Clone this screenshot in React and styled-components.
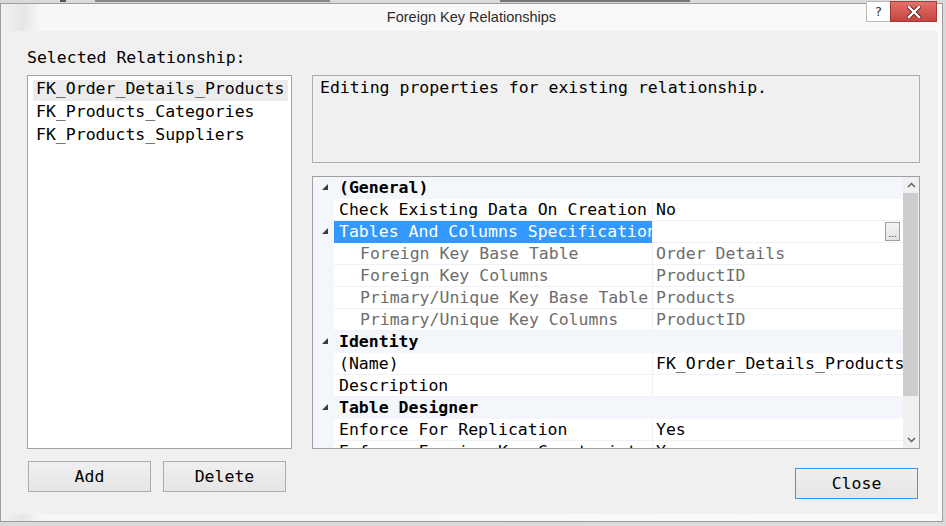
import styled, { createGlobalStyle } from 'styled-components';

const GlobalStyle = createGlobalStyle`
  html, body {
    margin: 0;
    padding: 0;
  }
  body {
    width: 946px;
    height: 526px;
    overflow: hidden;
    background: #d6d6d6;
    font-family: "DejaVu Sans Mono", "Liberation Mono", monospace;
  }
  * { box-sizing: border-box; }
`;

const Desktop = styled.div`
  width: 946px;
  height: 526px;
  padding-top: 3px;
  background:
    linear-gradient(90deg, transparent 60px, #555 60px, #555 66px, transparent 66px, transparent 95px, #888 95px, #888 330px, transparent 330px, transparent 500px, #777 500px, #777 690px, transparent 690px) top / 100% 2px no-repeat,
    #dadada;
`;

const Window = styled.div`
  position: relative;
  width: 943px;
  height: 519px;
  border: 1px solid #9c9c9c;
  background: linear-gradient(90deg, #f2f2f2 0, #e6e6e6 22px, #f7f7f7 40px, #f9f9f9 100%);
  display: flex;
  flex-direction: column;
`;

const TitleBar = styled.div`
  height: 27px;
  display: flex;
  align-items: center;
  justify-content: center;
  font-family: "Liberation Sans", Arial, sans-serif;
  font-size: 14.5px;
  color: #2b2b2b;
  padding-bottom: 1px;
`;

const Captions = styled.div`
  position: absolute;
  top: -3px;
  right: 5px;
  display: flex;
`;

const HelpButton = styled.div`
  width: 24px;
  height: 21px;
  background: #fff;
  border: 1px solid #b9b9b9;
  border-right: none;
  display: flex;
  align-items: center;
  justify-content: center;
  font-family: "DejaVu Sans", sans-serif;
  font-size: 13px;
  color: #333;
`;

const CloseX = styled.div`
  width: 47px;
  height: 21px;
  background: linear-gradient(#e0726c, #c7433d);
  border: 1px solid #a43a35;
  display: flex;
  align-items: center;
  justify-content: center;
`;

const Client = styled.div`
  flex: 1;
  margin: 0 4px 7px 7px;
  background: #f0f0f0;
  padding: 17px 17px 0 19px;
  display: grid;
  grid-template-columns: 265px 608px;
  grid-template-rows: 27px 374px auto;
  column-gap: 20px;
  color: #000;
  font-size: 16.5px;
`;

const Label = styled.div`
  grid-column: 1 / 3;
  line-height: 20px;
`;

const ListBox = styled.div`
  border: 1px solid #a3a3a3;
  background: #fff;
  padding: 4px 3px 0 5px;
`;

const ListItem = styled.div`
  height: 21px;
  line-height: 17px;
  padding: 0 3px 4px;
  margin-bottom: 2px;
  white-space: nowrap;
  background: ${(p) => (p.$selected ? '#ececec' : 'transparent')};
`;

const RightStack = styled.div`
  display: flex;
  flex-direction: column;
  gap: 13px;
`;

const Description = styled.div`
  height: 88px;
  border: 1px solid #adadad;
  background: #f0f0f0;
  padding: 1px 7px 0;
  line-height: 21px;
`;

const PropGrid = styled.div`
  height: 273px;
  border: 1px solid #a0a0a0;
  display: flex;
  overflow: hidden;
  background: #fff;
`;

const Rows = styled.div`
  flex: 1;
  overflow: hidden;
`;

const Row = styled.div`
  display: grid;
  grid-template-columns: 21px 318px 1px 250px;
  height: 22px;
  line-height: 21px;
  background: #f3f6fb;
`;

const Gutter = styled.div`
  display: flex;
  align-items: center;
  justify-content: center;
  padding: 0 1px 2px 3px;
`;

const CatLabel = styled.div`
  grid-column: 2 / 5;
  font-weight: bold;
  padding-left: 5px;
  white-space: nowrap;
`;

const NameCell = styled.div`
  overflow: hidden;
  white-space: nowrap;
  padding-left: ${(p) => (p.$sub ? '26px' : '5px')};
  color: ${(p) => (p.$selected ? '#fff' : p.$sub ? '#6d6d6d' : '#000')};
  background: ${(p) => (p.$selected ? '#3399ff' : '#fff')};
  border-bottom: 1px solid ${(p) => (p.$selected ? '#3399ff' : '#eff1f4')};
`;

const Divider = styled.div`
  background: #eff1f4;
`;

const ValueCell = styled.div`
  position: relative;
  overflow: hidden;
  white-space: nowrap;
  padding-left: 3px;
  color: ${(p) => (p.$sub ? '#6d6d6d' : '#000')};
  background: #fff;
  border-bottom: 1px solid #eff1f4;
`;

const EllipsisButton = styled.div`
  position: absolute;
  top: 1px;
  right: 3px;
  width: 15px;
  height: 19px;
  border: 1px solid #a0a0a0;
  background: linear-gradient(#f4f4f4, #e4e4e4);
  font-family: "DejaVu Sans", sans-serif;
  font-size: 9px;
  line-height: 22px;
  text-align: center;
  color: #222;
`;

const ScrollBar = styled.div`
  width: 16px;
  background: #f0f0f0;
  display: flex;
  flex-direction: column;
`;

const ScrollArrow = styled.div`
  height: 16px;
  display: flex;
  align-items: center;
  justify-content: center;
`;

const ScrollTrack = styled.div`
  flex: 1;
  padding: 0 1px 0 0;
`;

const ScrollThumb = styled.div`
  height: 203px;
  background: #cdcdcd;
`;

const Footer = styled.div`
  grid-column: 1 / 3;
  display: flex;
  align-items: flex-start;
  padding-top: 12px;
`;

const Button = styled.button`
  width: 123px;
  height: 31px;
  margin: ${(p) => p.$margin || '0'};
  border: 1px solid ${(p) => (p.$default ? '#3399ff' : '#acacac')};
  background: linear-gradient(#f0f0f0, #e5e5e5);
  font-family: "DejaVu Sans Mono", monospace;
  font-size: 16.5px;
  color: #000;
  padding: 0;
`;

const Spacer = styled.div`
  flex: 1;
`;

const Expander = () => (
  <svg width="6" height="6" viewBox="0 0 6 6">
    <polygon points="6,0 6,6 0,6" fill="#3c3c3c" />
  </svg>
);

const Chevron = ({ up }) => (
  <svg width="9" height="6" viewBox="0 0 9 6">
    <polyline
      points={up ? '1,5 4.5,1.5 8,5' : '1,1 4.5,4.5 8,1'}
      fill="none"
      stroke="#606060"
      strokeWidth="1.5"
    />
  </svg>
);

const CloseGlyph = () => (
  <svg width="14" height="12" viewBox="0 0 14 12">
    <path d="M2 1 L12 11 M12 1 L2 11" stroke="#5a1f1c" strokeWidth="4.2" strokeLinecap="square" />
    <path d="M2 1 L12 11 M12 1 L2 11" stroke="#fff" strokeWidth="2.4" strokeLinecap="square" />
  </svg>
);

const relationships = [
  'FK_Order_Details_Products',
  'FK_Products_Categories',
  'FK_Products_Suppliers',
];

const rows = [
  { cat: '(General)' },
  { name: 'Check Existing Data On Creation', value: 'No' },
  { name: 'Tables And Columns Specification', value: '', expand: true, selected: true, button: true },
  { name: 'Foreign Key Base Table', value: 'Order Details', sub: true },
  { name: 'Foreign Key Columns', value: 'ProductID', sub: true },
  { name: 'Primary/Unique Key Base Table', value: 'Products', sub: true },
  { name: 'Primary/Unique Key Columns', value: 'ProductID', sub: true },
  { cat: 'Identity' },
  { name: '(Name)', value: 'FK_Order_Details_Products' },
  { name: 'Description', value: '' },
  { cat: 'Table Designer' },
  { name: 'Enforce For Replication', value: 'Yes' },
  { name: 'Enforce Foreign Key Constraint', value: 'Yes' },
];

const App = () => {
  return (
    <Desktop>
      <GlobalStyle />
      <Window>
        <TitleBar>Foreign Key Relationships</TitleBar>
        <Captions>
          <HelpButton>?</HelpButton>
          <CloseX>
            <CloseGlyph />
          </CloseX>
        </Captions>
        <Client>
          <Label>Selected Relationship:</Label>
          <ListBox>
            {relationships.map((r, i) => (
              <ListItem key={r} $selected={i === 0}>{r}</ListItem>
            ))}
          </ListBox>
          <RightStack>
            <Description>Editing properties for existing relationship.</Description>
            <PropGrid>
              <Rows>
                {rows.map((row, i) =>
                  row.cat ? (
                    <Row key={i}>
                      <Gutter><Expander /></Gutter>
                      <CatLabel>{row.cat}</CatLabel>
                    </Row>
                  ) : (
                    <Row key={i}>
                      <Gutter>{row.expand && <Expander />}</Gutter>
                      <NameCell $sub={row.sub} $selected={row.selected}>{row.name}</NameCell>
                      <Divider />
                      <ValueCell $sub={row.sub}>
                        {row.value}
                        {row.button && <EllipsisButton>...</EllipsisButton>}
                      </ValueCell>
                    </Row>
                  )
                )}
              </Rows>
              <ScrollBar>
                <ScrollArrow><Chevron up /></ScrollArrow>
                <ScrollTrack>
                  <ScrollThumb />
                </ScrollTrack>
                <ScrollArrow><Chevron /></ScrollArrow>
              </ScrollBar>
            </PropGrid>
          </RightStack>
          <Footer>
            <Button $margin="0 0 0 1px">Add</Button>
            <Button $margin="0 0 0 12px">Delete</Button>
            <Spacer />
            <Button $default $margin="7px 2px 0 0">Close</Button>
          </Footer>
        </Client>
      </Window>
    </Desktop>
  );
};

export default App;
